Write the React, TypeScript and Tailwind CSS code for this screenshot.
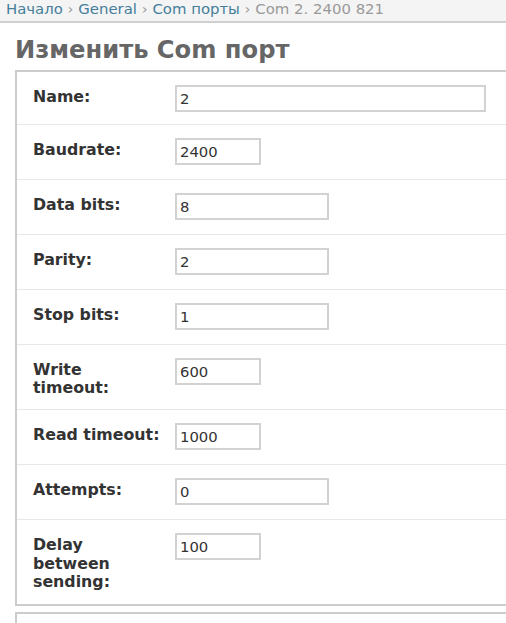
import React from "react";

type Row = { label: string; value: string; w: number };

const rows: Row[] = [
  { label: "Name:", value: "2", w: 311 },
  { label: "Baudrate:", value: "2400", w: 86 },
  { label: "Data bits:", value: "8", w: 154 },
  { label: "Parity:", value: "2", w: 154 },
  { label: "Stop bits:", value: "1", w: 154 },
  { label: "Write timeout:", value: "600", w: 86 },
  { label: "Read timeout:", value: "1000", w: 86 },
  { label: "Attempts:", value: "0", w: 154 },
  { label: "Delay between sending:", value: "100", w: 86 },
];

export default function App() {
  return (
    <div
      className="w-[506px] h-[623px] overflow-hidden bg-white"
      style={{ fontFamily: '"DejaVu Sans", Verdana, sans-serif' }}
    >
      <div className="w-[600px]">
        <div className="h-[23px] bg-[#f4f4f4] border-b-2 border-[#d0d0d0] pl-[6px] pt-[0px] text-[14.9px] leading-[18px] whitespace-nowrap">
          <span className="text-[#447e9b]">Начало</span>
          <span className="text-[#999]"> › </span>
          <span className="text-[#447e9b]">General</span>
          <span className="text-[#999]"> › </span>
          <span className="text-[#447e9b]">Com порты</span>
          <span className="text-[#999]"> › Com 2. 2400 821</span>
        </div>
        <div className="pl-[15px]">
          <h1 className="mt-[13px] mb-[6px] text-[24.2px] leading-[28px] font-bold text-[#666]">
            Изменить Com порт
          </h1>
          <div className="border-t-2 border-l-2 border-b-2 border-[#cccccc]">
            {rows.map((r, i) => (
              <div
                key={r.label}
                className={
                  "flex items-start pl-[16px] pt-[13px] " +
                  (i === 0 ? "pb-[10px] " : i === rows.length - 1 ? "pb-[13px] " : "pb-[12px] ") +
                  (i < rows.length - 1 ? "border-b border-[#e8e8e8]" : "")
                }
              >
                <label className="w-[128px] mr-[14px] pt-[3px] text-[15.8px] leading-[18.2px] font-bold text-[#333]">
                  {r.label}
                </label>
                <input
                  readOnly
                  value={r.value}
                  style={{ width: r.w }}
                  className="h-[27px] mb-[2px] border-2 border-[#d2d2d2] px-[3px] text-[14.8px] leading-[17px] text-[#333] outline-none"
                />
              </div>
            ))}
          </div>
          <div className="mt-[6px] h-[40px] border-t-2 border-l-2 border-[#cccccc]" />
        </div>
      </div>
    </div>
  );
}
